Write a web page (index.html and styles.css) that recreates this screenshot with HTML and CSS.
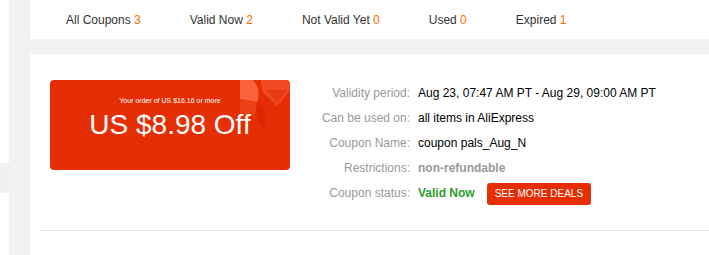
FILE: index.html
```html
<!DOCTYPE html>
<html lang="en">
<head>
<meta charset="utf-8">
<title>My Coupons</title>
<link rel="stylesheet" href="styles.css">
</head>
<body>
<div class="layout">
  <aside class="sidebar">
    <div class="side-item"></div>
  </aside>
  <main class="main">
    <nav class="tabs">
      <span class="tab">All Coupons <em class="num">3</em></span>
      <span class="tab">Valid Now <em class="num">2</em></span>
      <span class="tab">Not Valid Yet <em class="num">0</em></span>
      <span class="tab">Used <em class="num">0</em></span>
      <span class="tab">Expired <em class="num">1</em></span>
    </nav>
    <section class="list">
      <div class="coupon">
        <div class="ticket">
          <svg class="deco" viewBox="0 0 50 52" width="50" height="52" aria-hidden="true">
            <path d="M0 0 H13 C19 7 20 15 17 22 L0 19 Z" fill="#ff7a55" opacity="0.7"/>
            <path d="M0 19 L17 22 C16 28 15 33 14 36 L0 34 Z" fill="#ff6a45" opacity="0.3"/>
            <path d="M21 0 H48 Q50 0 50 2 V10 L37 26 L22 11 Z" fill="#ff6a45" opacity="0.45"/>
            <path d="M26 10 H47 L37 23 Z" fill="#d42600" opacity="0.4"/>
            <path d="M17 22 C25 24 28 36 25 52 C19 44 14 34 17 22 Z" fill="#c82000" opacity="0.4"/>
          </svg>
          <div class="cond">Your order of US $16.16 or more</div>
          <div class="amount">US $8.98 Off</div>
        </div>
        <dl class="details">
          <dt>Validity period:</dt>
          <dd>Aug 23, 07:47 AM PT - Aug 29, 09:00 AM PT</dd>
          <dt>Can be used on:</dt>
          <dd>all items in AliExpress</dd>
          <dt>Coupon Name:</dt>
          <dd>coupon pals_Aug_N</dd>
          <dt>Restrictions:</dt>
          <dd class="muted-bold">non-refundable</dd>
          <dt>Coupon status:</dt>
          <dd class="status"><span class="valid">Valid Now</span><a class="deals" href="#">SEE MORE DEALS</a></dd>
        </dl>
      </div>
    </section>
  </main>
</div>
</body>
</html>
```

FILE: styles.css
```css
* { box-sizing: border-box; }
html, body { margin: 0; padding: 0; }
body {
  font-family: "Liberation Sans", Arial, sans-serif;
  color: #333;
  background: #fff;
}
.layout {
  display: flex;
  height: 255px;
  overflow: hidden;
}
.sidebar {
  width: 9px;
  flex: none;
  background: #fff;
  padding-top: 163px;
}
.side-item {
  height: 30px;
  background: #f0f0f0;
}
.main {
  flex: 1;
  background: #f2f2f2;
  padding-left: 21px;
}
.tabs {
  height: 39px;
  background: #fff;
  display: flex;
  align-items: center;
  gap: 49px;
  padding-left: 36px;
  font-size: 12px;
  color: #333;
}
.tab { white-space: nowrap; }
.num { font-style: normal; color: #ff6a00; }
.list {
  margin-top: 15px;
  background: #fff;
  height: 201px;
  padding: 0 0 0 10px;
}
.coupon {
  display: flex;
  padding: 26px 0 25px 10px;
  border-bottom: 1px solid #e3e3e3;
}
.ticket {
  position: relative;
  width: 240px;
  height: 90px;
  flex: none;
  background: #e62e04;
  border-radius: 4px;
  color: #fff;
  text-align: center;
  padding-top: 16px;
  overflow: hidden;
}
.deco {
  position: absolute;
  top: 0;
  right: 0;
}
.cond {
  position: relative;
  font-size: 7px;
  line-height: 10px;
}
.amount {
  position: relative;
  font-size: 28px;
  line-height: 32px;
  margin-top: 3px;
}
.details {
  margin: 0 0 0 20px;
  display: grid;
  grid-template-columns: 100px auto;
  column-gap: 8px;
  grid-auto-rows: 25px;
  align-items: center;
  font-size: 12px;
}
.details dt {
  color: #999;
  text-align: right;
  white-space: nowrap;
}
.details dd {
  margin: 0;
  color: #000;
  white-space: nowrap;
}
.details dd.muted-bold {
  color: #999;
  font-weight: bold;
}
.status {
  display: flex;
  align-items: center;
}
.valid {
  color: #2a9d2a;
  font-weight: bold;
}
.deals {
  margin-left: 12px;
  margin-top: 3px;
  height: 22px;
  line-height: 22px;
  padding: 0 8px;
  background: #e62e04;
  color: #fff;
  font-size: 10px;
  border-radius: 3px;
  text-decoration: none;
  white-space: nowrap;
}
```
